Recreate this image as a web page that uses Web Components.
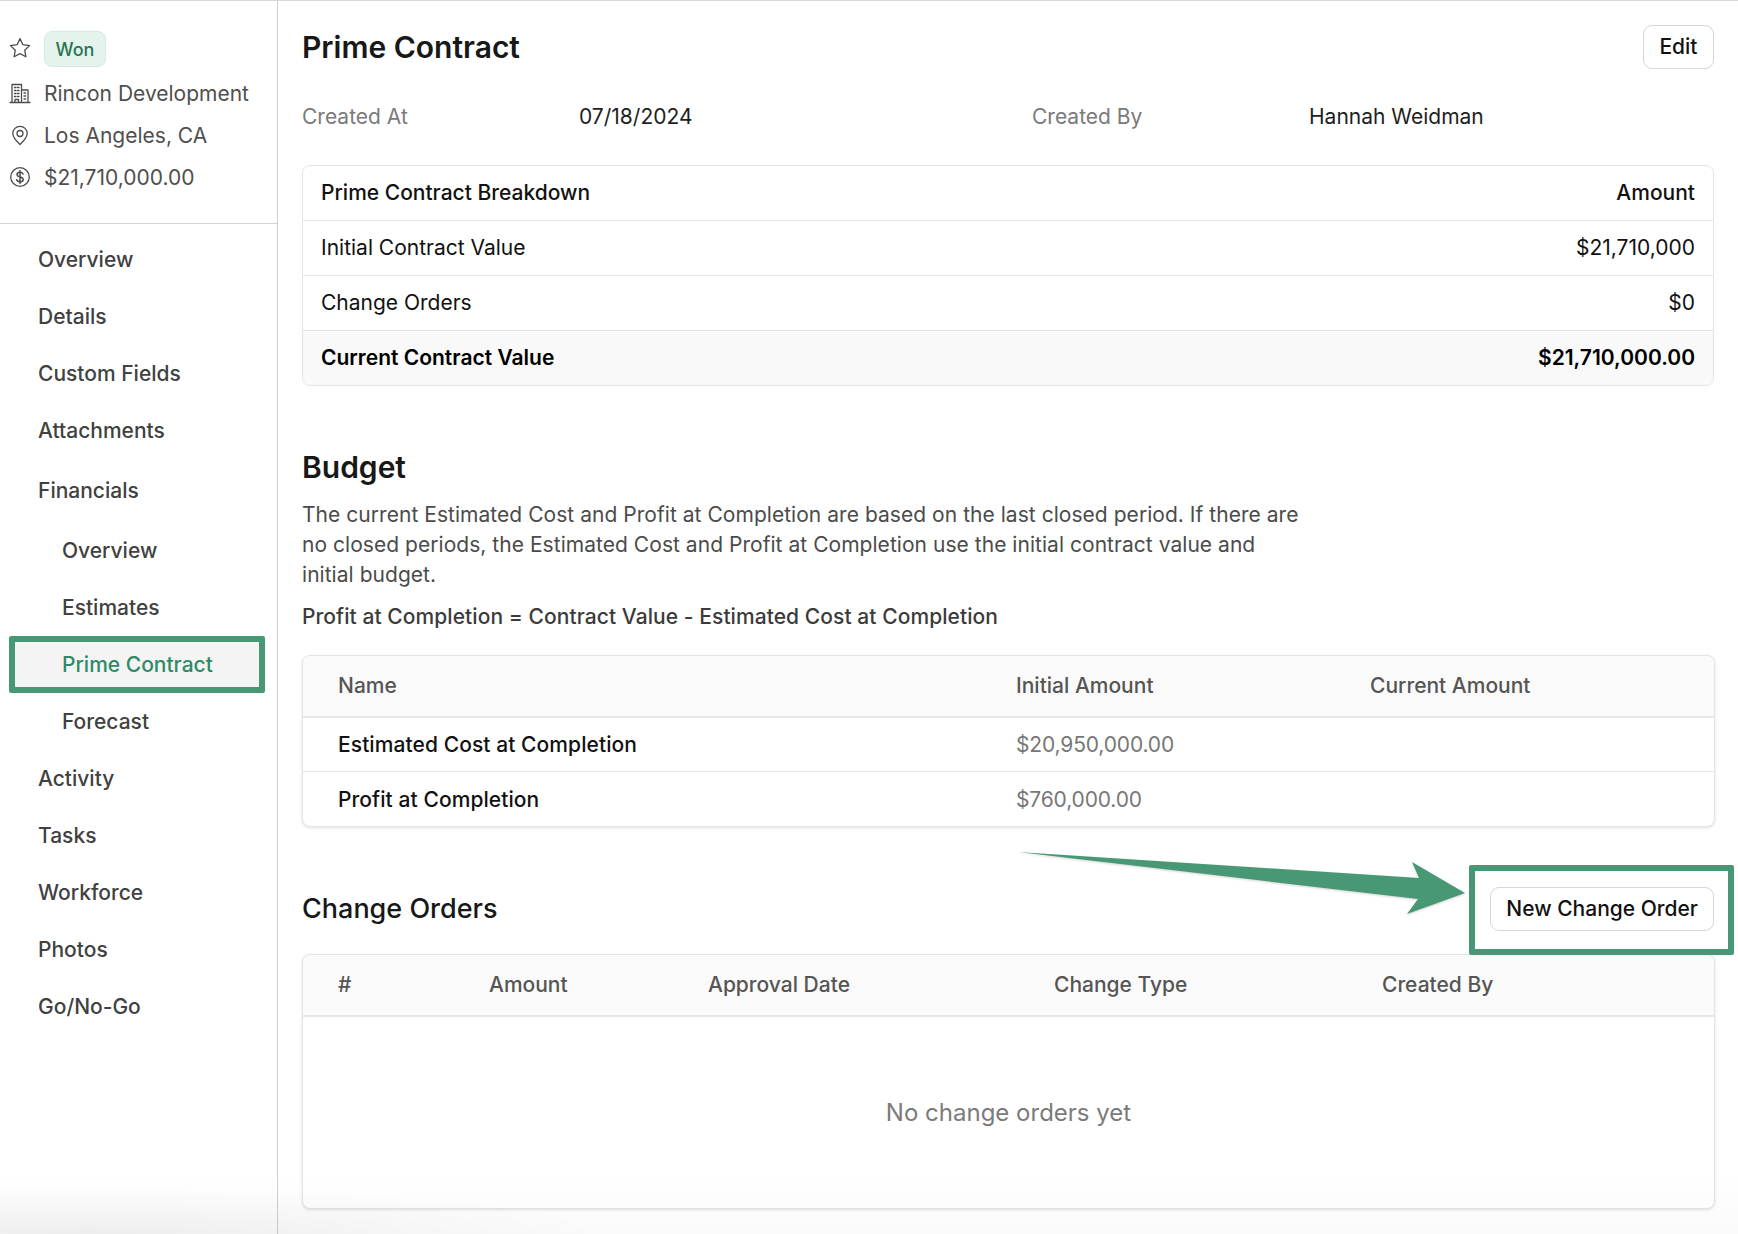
<!doctype html>
<html><head><meta charset="utf-8">
<style>
html,body{margin:0;padding:0;background:#fff}
body{font-family:Inter,"Noto Sans",sans-serif;width:1738px;height:1234px;overflow:hidden;position:relative}
</style></head>
<body>
<template id="t-app"><style>
:host{display:flex;width:1738px;height:1234px;border-top:1px solid #d8d8d8;box-sizing:border-box;position:relative;color:#1a1a1a}
.shade{position:absolute;left:0;right:0;bottom:0;height:60px;pointer-events:none;background:radial-gradient(ellipse 520px 50px at 90px 100%,rgba(0,0,0,.05),rgba(0,0,0,.015) 65%,rgba(0,0,0,0) 100%),linear-gradient(to bottom,rgba(0,0,0,0),rgba(0,0,0,.018))}
svg.arrow{position:absolute;left:1000px;top:840px;width:480px;height:90px;overflow:visible;pointer-events:none;filter:drop-shadow(0 1px 1px rgba(0,0,0,.18))}
</style><slot name="side"></slot><slot name="main"></slot>
<svg class="arrow" viewBox="1000 840 480 90"><polygon points="1018,851 1419,877 1412,861 1465,892 1407,913 1418,898" fill="#489875"/></svg>
<div class="shade"></div></template>

<template id="t-side"><style>
:host{display:block;width:278px;flex:none;border-right:1px solid #cfcfcf;box-sizing:border-box;height:100%}
.head{height:223px;border-bottom:1px solid #d4d4d4;box-sizing:border-box;padding-top:26px}
nav{padding-top:7px;display:flex;flex-direction:column}
</style><div class="head"><slot name="head"></slot></div><nav><slot></slot></nav></template>

<template id="t-info"><style>
:host{display:flex;align-items:center;height:42px;padding-left:9px;gap:13px;font-size:21px;color:#4f4f4f;white-space:nowrap}
::slotted(svg){width:22px;height:22px;flex:none;fill:none;stroke:#4d4d4d;stroke-width:1.3;stroke-linejoin:round;stroke-linecap:round}
</style><slot name="icon"></slot><span><slot></slot></span></template>

<template id="t-badge"><style>
:host{display:inline-flex;align-items:center;justify-content:center;width:62px;height:36px;box-sizing:border-box;border:1px solid #d3ece1;background:#e4f4ec;border-radius:8px;color:#2a7457;font-size:18px;font-weight:500;position:relative;top:1px}
</style><slot></slot></template>

<template id="t-nav"><style>
:host{display:flex;align-items:center;height:57px;box-sizing:border-box;padding-left:38px;font-size:21px;font-weight:500;color:#414141;position:relative}
:host([sub]){padding-left:62px}
:host([spaced]){margin:3px 0}
:host([active]){color:#2f8a67;z-index:0}
:host([active])::before{content:"";position:absolute;left:9px;right:12px;top:0;bottom:0;box-sizing:border-box;border:6px solid #489875;border-radius:2px;background:#f4f4f4;z-index:-1}
</style><slot></slot></template>

<template id="t-main"><style>
:host{display:flex;flex-direction:column;flex:1;min-width:0;padding:24px 24px 0 24px;box-sizing:border-box}
</style><slot></slot></template>

<template id="t-bar"><style>
:host{display:flex;justify-content:space-between;align-items:center;height:44px}
</style><slot></slot></template>

<template id="t-title"><style>
:host{display:block;font-size:30px;font-weight:600;line-height:40px;color:#181818}
:host([small]){font-size:27px;font-weight:500}
</style><slot></slot></template>

<template id="t-btn"><style>
:host{display:inline-flex;align-items:center;height:44px;padding:0 15.5px 2px;box-sizing:border-box;border:1px solid #d6d6d6;border-radius:9px;background:#fff;font-size:21px;font-weight:500;color:#111;position:relative}
:host([boxed]){padding:0 15px 2px}
:host([boxed])::before{content:"";position:absolute;left:-22px;right:-21px;top:-23px;bottom:-25px;border:6px solid #489875;border-radius:2px;pointer-events:none}
</style><slot></slot></template>

<template id="t-meta"><style>
:host{display:grid;grid-template-columns:277px 453px 277px 1fr;height:30px;margin-top:33px;line-height:30px;font-size:21px;color:#1e1e1e}
</style><slot></slot></template>

<template id="t-table"><style>
:host{display:block;box-sizing:border-box;border:1px solid #e4e4e4;border-radius:8px;overflow:hidden;background:#fff}
:host([shadow]){box-shadow:0 1px 3px rgba(0,0,0,.12);width:1413px}
</style><slot></slot></template>

<template id="t-row"><style>
:host{display:grid;grid-template-columns:var(--cols,1fr auto);align-items:center;height:55px;box-sizing:border-box;padding:0 18px 2px;border-bottom:1px solid #e6e6e6;font-size:21px;color:#111}
:host(:last-child){border-bottom:0;height:54px}
:host([bold]){background:#f9f9f9;font-weight:600;color:#000}
:host([medium]){font-weight:500}
:host([th]){height:62px;padding-left:35px;border-bottom:2px solid #e6e6e6;background:#fafafa;color:#555;font-weight:500}
:host([td]){padding-left:35px;padding-bottom:0;height:54px;letter-spacing:.08px}
</style><slot></slot></template>

<template id="t-empty"><style>
:host{display:flex;align-items:center;justify-content:center;height:191px;font-size:24px;color:#7b7b7b}
</style><slot></slot></template>

<template id="t-para"><style>
:host{display:block;width:1000px;margin-top:13px;font-size:21px;line-height:30px;color:#4b4b4b;letter-spacing:.04px}
:host([formula]){width:auto;margin-top:12px;font-weight:500;color:#3b3b3b;letter-spacing:.07px}
</style><slot></slot></template>

<x-app>
  <x-side slot="side">
    <div slot="head">
      <x-info><svg slot="icon" viewBox="0 0 22 22"><path d="M11 1.600l2.900 6.100 6.700 .9-4.900 4.600 1.200 6.600-5.900-3.200-5.900 3.200 1.200-6.600-4.900-4.600 6.700-.9z"/></svg><x-badge>Won</x-badge></x-info>
      <x-info style="margin-top:3px"><svg slot="icon" viewBox="0 0 22 22"><path d="M1 20.500h20M3 20.500V2.500h9.500v18M12.500 8h6.500v12.500M5.500 5.500h1.500M8.500 5.500H10M5.500 8.500h1.500M8.500 8.500H10M5.500 11.500h1.500M8.500 11.500H10M5.500 14.500h1.500M8.500 14.500H10M6 20.500v-3h3.500v3M15 11h1.500M15 14h1.500M15 17h1.500"/></svg>Rincon Development</x-info>
      <x-info><svg slot="icon" viewBox="0 0 22 22"><path d="M11 20.500c-4-3.800-7.200-7.200-7.200-11a7.200 7.200 0 0 1 14.400 0c0 3.800-3.200 7.200-7.200 11z"/><circle cx="11" cy="9.500" r="3"/></svg>Los Angeles, CA</x-info>
      <x-info><svg slot="icon" viewBox="0 0 22 22"><circle cx="11" cy="11" r="9.300"/><path stroke-width="1.500" d="M14 8c-.4-1.200-1.500-1.800-3-1.800-1.800 0-3 .9-3 2.300 0 3.300 6.200 1.500 6.200 4.900 0 1.400-1.300 2.400-3.200 2.400-1.700 0-2.900-.7-3.300-2M11 4.500v13"/></svg>$21,710,000.00</x-info>
    </div>
    <x-nav>Overview</x-nav>
    <x-nav>Details</x-nav>
    <x-nav>Custom Fields</x-nav>
    <x-nav>Attachments</x-nav>
    <x-nav spaced>Financials</x-nav>
    <x-nav sub>Overview</x-nav>
    <x-nav sub>Estimates</x-nav>
    <x-nav sub active>Prime Contract</x-nav>
    <x-nav sub>Forecast</x-nav>
    <x-nav>Activity</x-nav>
    <x-nav>Tasks</x-nav>
    <x-nav>Workforce</x-nav>
    <x-nav>Photos</x-nav>
    <x-nav>Go/No-Go</x-nav>
  </x-side>
  <x-main slot="main">
    <x-bar><x-title>Prime Contract</x-title><x-btn>Edit</x-btn></x-bar>
    <x-meta><span style="color:#7a7a7a">Created At</span><span>07/18/2024</span><span style="color:#7a7a7a">Created By</span><span>Hannah Weidman</span></x-meta>
    <x-table style="margin-top:33px">
      <x-row medium><span>Prime Contract Breakdown</span><span>Amount</span></x-row>
      <x-row><span>Initial Contract Value</span><span>$21,710,000</span></x-row>
      <x-row><span>Change Orders</span><span>$0</span></x-row>
      <x-row bold><span>Current Contract Value</span><span>$21,710,000.00</span></x-row>
    </x-table>
    <x-title style="margin-top:61px">Budget</x-title>
    <x-para>The current Estimated Cost and Profit at Completion are based on the last closed period. If there are no closed periods, the Estimated Cost and Profit at Completion use the initial contract value and initial budget.</x-para>
    <x-para formula>Profit at Completion = Contract Value - Estimated Cost at Completion</x-para>
    <x-table shadow style="margin-top:23px;--cols:678px 354px 1fr">
      <x-row th><span>Name</span><span>Initial Amount</span><span>Current Amount</span></x-row>
      <x-row td medium><span>Estimated Cost at Completion</span><span style="color:#777;font-weight:400;letter-spacing:-.15px">$20,950,000.00</span><span></span></x-row>
      <x-row td medium><span>Profit at Completion</span><span style="color:#777;font-weight:400;letter-spacing:-.15px">$760,000.00</span><span></span></x-row>
    </x-table>
    <x-bar style="margin-top:60px;margin-bottom:23px"><x-title small>Change Orders</x-title><x-btn boxed>New Change Order</x-btn></x-bar>
    <x-table shadow style="--cols:151px 219px 346px 328px 1fr">
      <x-row th><span>#</span><span>Amount</span><span>Approval Date</span><span>Change Type</span><span>Created By</span></x-row>
      <x-empty>No change orders yet</x-empty>
    </x-table>
  </x-main>
</x-app>
<script>
const map={app:'x-app',side:'x-side',info:'x-info',badge:'x-badge',nav:'x-nav',main:'x-main',bar:'x-bar',title:'x-title',btn:'x-btn',meta:'x-meta',table:'x-table',row:'x-row',empty:'x-empty',para:'x-para'};
for(const [k,tag] of Object.entries(map)){
  customElements.define(tag,class extends HTMLElement{
    constructor(){super();this.attachShadow({mode:'open'}).appendChild(document.getElementById('t-'+k).content.cloneNode(true));}
  });
}
</script>
</body></html>
